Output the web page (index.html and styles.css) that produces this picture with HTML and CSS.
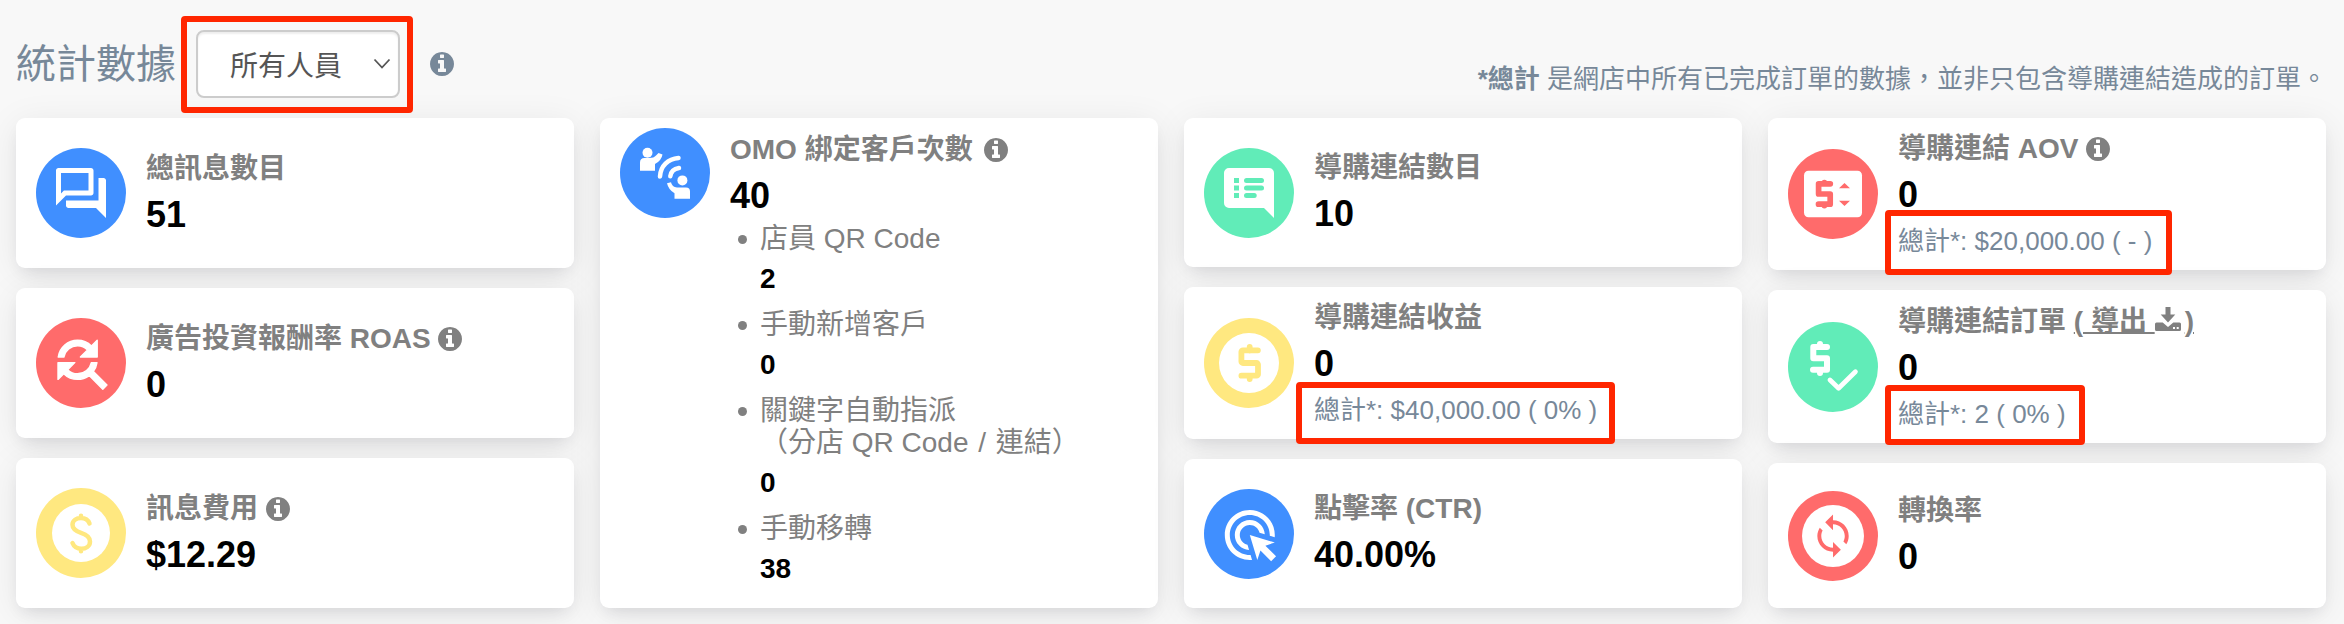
FILE: index.html
```html
<!DOCTYPE html>
<html lang="zh-Hant">
<head>
<meta charset="utf-8">
<title>統計數據</title>
<link rel="stylesheet" href="styles.css">
</head>
<body>
<svg class="defs" aria-hidden="true">
  <symbol id="info" viewBox="0 128 1536 1536"><path fill-rule="evenodd" d="M1024 1376v-160q0-14-9-23t-23-9h-96v-512q0-14-9-23t-23-9H544q-14 0-23 9t-9 23v160q0 14 9 23t23 9h96v320h-96q-14 0-23 9t-9 23v160q0 14 9 23t23 9h448q14 0 23-9t9-23zM896 480V320q0-14-9-23t-23-9H672q-14 0-23 9t-9 23v160q0 14 9 23t23 9h192q14 0 23-9t9-23zm640 416q0 209-103 385.5T1153.5 1561 768 1664t-385.5-103T103 1281.5 0 896t103-385.5T382.5 231 768 128t385.5 103T1433 510.5 1536 896z"/></symbol>
  <symbol id="dollar" viewBox="0 0 24 38"><path d="M20.2 6.3H5.2a1.5 1.5 0 0 0-1.5 1.5v9.7a1.5 1.5 0 0 0 1.5 1.5h13.600a1.500 1.500 0 0 1 1.500 1.500v9.700a1.500 1.500 0 0 1-1.500 1.500H3.700M12 3v3.500M12 31.700V35" fill="none" stroke="currentColor" stroke-width="5.800" stroke-linecap="round" stroke-linejoin="round"/></symbol>
</svg>

<header class="header">
  <h1 class="title">統計數據</h1>
  <div class="picker">
    <span class="picker-text">所有人員</span>
    <svg class="chevron" viewBox="0 0 18 12"><path d="M1.500 1.500 9 9.500l7.500-8"/></svg>
    <span class="mark mark-picker"></span>
  </div>
  <svg class="info info-head"><use href="#info"/></svg>
  <p class="note"><b>*總計</b> 是網店中所有已完成訂單的數據，並非只包含導購連結造成的訂單。</p>
</header>

<main class="board">
  <section class="column col-a">
    <article class="card">
      <svg class="badge blue" viewBox="0 0 90 90"><circle cx="45" cy="45" r="45"/><path class="w" transform="translate(15 15) scale(2.5)" d="M15 4v7H5.170L4 12.170V4h11m1-2H3c-.55 0-1 .45-1 1v14l4-4h10c.55 0 1-.45 1-1V3c0-.55-.45-1-1-1zm5 4h-2v9H6v2c0 .55.45 1 1 1h11l4 4V7c0-.55-.45-1-1-1z"/></svg>
      <div class="body"><h2 class="label">總訊息數目</h2><p class="value">51</p></div>
    </article>
    <article class="card">
      <svg class="badge red" viewBox="0 0 90 90"><circle cx="45" cy="45" r="45"/><path class="w" stroke="#fff" stroke-width=".5" stroke-linejoin="round" transform="translate(10.800 11) scale(2.8)" d="M11 6c1.380 0 2.630.56 3.540 1.460L12 10h6V4l-2.050 2.050C14.680 4.780 12.930 4 11 4c-3.530 0-6.430 2.610-6.920 6H6.100c.46-2.280 2.480-4 4.900-4zm5.640 9.140c.66-.9 1.120-1.970 1.280-3.140H15.900c-.46 2.280-2.480 4-4.900 4-1.380 0-2.630-.56-3.540-1.460L10 12H4v6l2.050-2.050C7.320 17.220 9.070 18 11 18c1.550 0 2.980-.51 4.140-1.360L20 21.490 21.490 20l-4.850-4.860z"/></svg>
      <div class="body"><h2 class="label">廣告投資報酬率 ROAS <svg class="info"><use href="#info"/></svg></h2><p class="value">0</p></div>
    </article>
    <article class="card">
      <svg class="badge yellow" viewBox="0 0 90 90"><circle cx="45" cy="45" r="45"/><circle class="w" cx="45" cy="45" r="29"/><path class="line" stroke-width="4.500" d="M53.500 35.500C52 31.500 48.500 30 45 30c-4.500 0-8.500 2.500-8.500 6.800 0 5 4.500 6.700 8.500 8 5 1.600 9 3.700 9 8.700 0 5-4.500 7.300-8.500 7.300-4.500 0-7.500-2-9-5.800M45 27.800V30M45 61v2.200"/></svg>
      <div class="body"><h2 class="label">訊息費用 <svg class="info"><use href="#info"/></svg></h2><p class="value">$12.29</p></div>
    </article>
  </section>

  <section class="column col-b">
    <article class="card card-tall">
      <svg class="badge blue" viewBox="0 0 90 90"><circle cx="45" cy="45" r="45"/>
        <g class="w"><circle cx="27.500" cy="24.800" r="5"/><path d="M20 42.700V34.500Q20 30 24.500 30H29q5 0 7-2.500l2.500-2.500 4 1.500q-1 6-7.500 9.500v6.700z"/><circle cx="62.400" cy="52.400" r="5"/><path d="M54.500 70.700v-5.500q-6-3.500-7.500-10l4-1q1 4.800 6 5.300h9q4 0 4 4v7.200z"/></g>
        <path class="wave" d="M58.500 30C48 31 40.500 38 40 48.500M59 40c-5 .8-8.200 4-8.700 8.300"/></svg>
      <div class="body">
        <h2 class="label">OMO 綁定客戶次數 <svg class="info"><use href="#info"/></svg></h2>
        <p class="value">40</p>
        <ul class="sources">
          <li><span class="source">店員 QR Code</span><b>2</b></li>
          <li><span class="source">手動新增客戶</span><b>0</b></li>
          <li><span class="source">關鍵字自動指派<br>（分店 QR Code <span class="slash">/</span> 連結）</span><b>0</b></li>
          <li><span class="source">手動移轉</span><b>38</b></li>
        </ul>
      </div>
    </article>
  </section>

  <section class="column col-c">
    <article class="card">
      <svg class="badge green" viewBox="0 0 90 90"><circle cx="45" cy="45" r="45"/><path class="w" d="M25 20h40a5 5 0 0 1 5 5v45L60 60H25a5 5 0 0 1-5-5V25a5 5 0 0 1 5-5z"/><path d="M30 30h5v5h-5zM30 37.500h5v5h-5zM30 45h5v5h-5z"/><rect x="40" y="30" width="20" height="5" rx="2.500"/><rect x="40" y="37.500" width="20" height="5" rx="2.500"/><rect x="40" y="45" width="12.700" height="5" rx="2.500"/></svg>
      <div class="body"><h2 class="label">導購連結數目</h2><p class="value">10</p></div>
    </article>
    <article class="card">
      <svg class="badge yellow" viewBox="0 0 90 90"><circle cx="45" cy="45" r="45"/><circle class="w" cx="45" cy="45" r="30"/><use href="#dollar" x="33.700" y="26" width="24" height="38"/></svg>
      <div class="body"><h2 class="label">導購連結收益</h2><p class="value">0</p><p class="total">總計*: $40,000.00 ( 0% )<span class="mark mark-revenue"></span></p></div>
    </article>
    <article class="card">
      <svg class="badge blue" viewBox="0 0 90 90"><circle cx="45" cy="45" r="45"/><path class="w" transform="translate(15.800 16) scale(2.500)" d="M11.710 17.990C8.530 17.840 6 15.220 6 12c0-3.310 2.690-6 6-6 3.220 0 5.840 2.530 5.990 5.710l-2.100-.63C15.480 9.310 13.890 8 12 8c-2.210 0-4 1.790-4 4 0 1.890 1.310 3.480 3.080 3.890l.63 2.100zM22 12c0 .3-.01.6-.04.9l-1.970-.59c.01-.1.01-.21.01-.31 0-4.420-3.580-8-8-8s-8 3.580-8 8 3.580 8 8 8c.1 0 .21 0 .31-.01l.59 1.970c-.3.03-.6.04-.9.04-5.520 0-10-4.480-10-10S6.480 2 12 2s10 4.480 10 10zm-3.770 4.260L22 15l-10-3 3 10 1.260-3.770 4.270 4.270 1.980-1.980-4.280-4.260z"/></svg>
      <div class="body"><h2 class="label">點擊率 (CTR)</h2><p class="value">40.00%</p></div>
    </article>
  </section>

  <section class="column col-d">
    <article class="card">
      <svg class="badge red" viewBox="0 0 90 90"><circle cx="45" cy="45" r="45"/><rect class="w" x="16" y="21.700" width="58" height="46.600" rx="4.500"/><path class="line" stroke-width="5.700" d="M42.300 34.800H30.600V45h11.600v10.200H30.500M36.400 33.500v1.300M36.400 55.200v1.400"/><path d="M51 39.300 56.500 34l5.500 5.300zM51 51.700h11L56.500 57z"/></svg>
      <div class="body"><h2 class="label">導購連結 AOV <svg class="info"><use href="#info"/></svg></h2><p class="value">0</p><p class="total">總計*: $20,000.00 ( - )<span class="mark mark-aov"></span></p></div>
    </article>
    <article class="card">
      <svg class="badge green" viewBox="0 0 90 90"><circle cx="45" cy="45" r="45"/><path class="line on" stroke-width="6" d="M39 25H25.300v11.200H39v11.600H25M32 22v3M32 48v3"/><path class="line on" stroke-width="4.800" stroke-linejoin="miter" d="M42 58l8.600 8.200L67.400 49.800"/></svg>
      <div class="body"><h2 class="label">導購連結訂單 <a class="export">( 導出 <svg class="download" viewBox="0 0 26 24"><path fill-rule="evenodd" d="M10.500 0h5v7.500h4.800L13 15.500 5.700 7.500h4.800zM1.500 15.500h6.200L13 20l5.300-4.500h6.200q1.500 0 1.500 1.500v5.500q0 1.500-1.500 1.500h-23Q0 24 0 22.500V17q0-1.500 1.500-1.500zM18 20v2h2v-2zm3.700 0v2h2v-2z"/></svg>)</a></h2><p class="value">0</p><p class="total">總計*: 2 ( 0% )<span class="mark mark-orders"></span></p></div>
    </article>
    <article class="card">
      <svg class="badge red" viewBox="0 0 90 90"><circle cx="45" cy="45" r="45"/><circle class="w" cx="45" cy="45" r="31"/><path transform="translate(21.500 21.500) scale(1.960)" d="M12 4V1L8 5l4 4V6c3.310 0 6 2.690 6 6 0 1.010-.25 1.970-.7 2.800l1.460 1.460C19.540 15.030 20 13.570 20 12c0-4.420-3.580-8-8-8zm0 14c-3.310 0-6-2.690-6-6 0-1.010.25-1.970.7-2.800L5.240 7.740C4.460 8.970 4 10.430 4 12c0 4.420 3.580 8 8 8v3l4-4-4-4v3z"/></svg>
      <div class="body"><h2 class="label">轉換率</h2><p class="value">0</p></div>
    </article>
  </section>
</main>
</body>
</html>
```
FILE: styles.css
```css
* { box-sizing: border-box; }

body {
  margin: 0;
  height: 624px;
  overflow: hidden;
  background: #f8f8f8;
  color: #808080;
  font-family: "Liberation Sans", "Noto Sans CJK TC", sans-serif;
}

h1, h2, p, ul { margin: 0; padding: 0; }

.defs { display: none; }

.header {
  display: flex;
  height: 118px;
  padding: 30px 17px 0 16px;
  color: #778899;
}

.title {
  width: 180px;
  font-size: 40px;
  font-weight: 400;
  line-height: 68px;
  white-space: nowrap;
}

.picker {
  position: relative;
  display: flex;
  align-items: center;
  justify-content: space-between;
  width: 204px;
  height: 68px;
  padding: 0 7px 0 32px;
  border: 2px solid #ccc;
  border-radius: 8px;
  background: #fff;
  box-shadow: inset 0 2px 2px rgba(0, 0, 0, .07);
  color: #555;
  font-size: 28px;
}

.chevron {
  width: 18px;
  height: 12px;
  fill: none;
  stroke: #555;
  stroke-width: 1.8;
}

.info {
  width: 24px;
  height: 24px;
  fill: currentColor;
  vertical-align: -3px;
}

.info-head { margin: 22px 0 0 30px; }

.note {
  margin: 29px 0 0 auto;
  font-size: 26px;
  line-height: 40px;
  white-space: nowrap;
}

.mark {
  position: absolute;
  border: 6px solid #ff2600;
  border-radius: 4px;
}

.mark-picker { left: -17px; top: -16px; width: 232px; height: 97px; }
.mark-revenue { left: -18px; top: -5px; width: 319px; height: 62px; }
.mark-aov { left: -13px; top: -8px; width: 287px; height: 65px; }
.mark-orders { left: -13px; top: -6px; width: 200px; height: 60px; }

.board {
  display: grid;
  grid-template-columns: repeat(4, 558px);
  column-gap: 26px;
  padding-left: 16px;
}

.column {
  display: grid;
  gap: 20px;
  height: 490px;
}

.col-a { grid-template-rows: 150px 150px 150px; }
.col-b { grid-template-rows: 490px; }
.col-c { grid-template-rows: 149px 152px 149px; }
.col-d { grid-template-rows: 152px 153px 145px; }

.card {
  display: flex;
  align-items: center;
  gap: 20px;
  padding: 0 20px;
  border-radius: 9px;
  background: #fff;
  box-shadow: 0 6px 36px rgba(0, 0, 0, .08), 0 8px 16px -6px rgba(30, 30, 60, .12);
}

.badge {
  flex: none;
  width: 90px;
  height: 90px;
  fill: currentColor;
}

.body { padding-top: 2px; }

.blue { color: #408fff; }
.red { color: #ff6b6b; }
.yellow { color: #ffe880; }
.green { color: #61ecb8; }

.w { fill: #fff; }
.line { fill: none; stroke: currentColor; stroke-linecap: round; stroke-linejoin: round; }
.on { stroke: #fff; }
.wave { fill: none; stroke: #fff; stroke-width: 4.5; stroke-linecap: round; }

.label {
  font-size: 28px;
  line-height: 46px;
  white-space: nowrap;
}

.value {
  color: #000;
  font-size: 36px;
  font-weight: 700;
  line-height: 46px;
}

.value:last-child { padding-bottom: 5px; }

.total {
  position: relative;
  color: #778899;
  font-size: 26px;
  line-height: 46px;
  white-space: nowrap;
}

.export {
  text-decoration: underline;
  text-decoration-thickness: 2px;
}

.download {
  width: 26px;
  height: 24px;
  margin-right: 4px;
  fill: currentColor;
  vertical-align: 0;
}

.card-tall {
  align-items: flex-start;
  padding-top: 10px;
}

.card-tall .body { margin-top: -3px; }
.card-tall .info { margin-left: 4px; }

.sources {
  padding-left: 30px;
  font-size: 28px;
  list-style: none;
}

.sources li {
  position: relative;
  padding-bottom: 3px;
}

.sources li::before {
  content: "";
  position: absolute;
  left: -22px;
  top: 16px;
  width: 9px;
  height: 9px;
  border-radius: 50%;
  background: #808080;
}

.source {
  display: block;
  line-height: 32px;
  padding-top: 4px;
  white-space: nowrap;
}

.slash { margin: 0 2px; }

.sources b {
  display: block;
  color: #000;
  line-height: 47px;
}
```
